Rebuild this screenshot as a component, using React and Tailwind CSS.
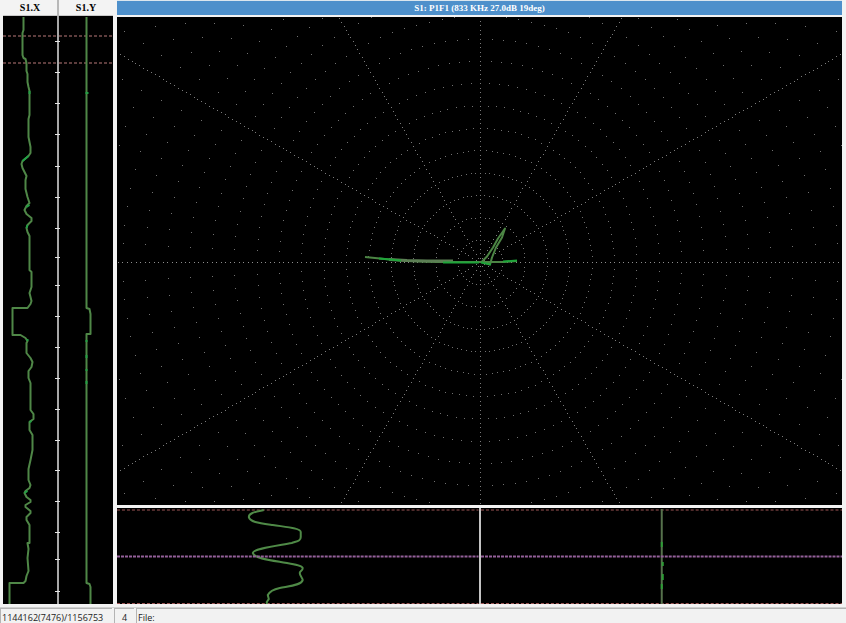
import clsx from "clsx";

const STEP = 22.35;
const CX = 363;
const CY = 245;

// range rings: one dot every 3 degrees, fewer on the small ones
const ringDots = [];
for (let ring = 1; ring <= 19; ring++) {
    const gap = [0, 10, 6, 3.75][ring] || 3;
    for (let deg = 0; deg < 360; deg += gap) {
        if (deg % 30 === 0) continue;
        const a = (deg * Math.PI) / 180;
        ringDots.push([
            Math.round(CX + ring * STEP * Math.cos(a)),
            Math.round(CY + ring * STEP * Math.sin(a)),
        ]);
    }
}

const spokeDots = [];
const axisDots = [];
for (let deg = 0; deg < 360; deg += 30) {
    const a = (deg * Math.PI) / 180;
    const dots = deg % 180 === 0 ? axisDots : spokeDots;
    for (let i = 1; i <= 98; i++) {
        const r = (i * STEP) / 5;
        dots.push([
            Math.round(CX + r * Math.cos(a)),
            Math.round(CY + r * Math.sin(a)),
        ]);
    }
}

const toPath = (dots) => dots.map(([x, y]) => `M${x} ${y}h1v1h-1z`).join("");

const TICKS = [
    25, 56, 87, 118, 150, 181, 212, 241, 269, 300, 331, 362, 393, 424, 454, 485,
    516, 543, 575,
];

const X_TRACE =
    "M20 0V13L19 16V38L20 41L22 42L23 46V54L24 57V65L25 70L26 74V98L25 102V120L27 130V136L25 139L19 144L18 147L19 151L23 159L22 163V172L24 180L26 186L23 189L21 193L23 197L28 201V204L24 208L23 211L24 215L26 219V253L28 255V270L26 276L27 280L28 284L27 287L24 291H9V318H17L22 321L24 324L23 326V336L27 341L29 345L28 350L25 354V361L27 366V393L30 397V402L26 405V413L29 418V433L27 443L25 452V463L27 468L26 471L22 474L21 476L23 480L27 483V485L22 488V490L27 494V496L23 500V503L26 508V526H24L25 532L24 541L25 554L23 559L22 564L20 566H6V588";
const Y_TRACE = "M27 0V291L30 292L31 297V317H27V566L30 567L31 570V588";

function Channel({ label, path, marks, className }) {
    return (
        <section className={clsx("flex min-w-0 flex-1 flex-col", className)}>
            <h2 className="h-4 border-b border-[#c9c9c9] bg-[#f3f3f3] text-center text-[10px] leading-[15px] font-bold text-black">
                {label}
            </h2>
            <svg
                viewBox="0 0 54 588"
                preserveAspectRatio="none"
                className="min-h-0 w-full flex-1 bg-black"
            >
                <path
                    d="M0 20H54M0 47H54"
                    stroke="#7c5252"
                    strokeWidth="1.5"
                    strokeDasharray="3 2"
                />
                <g fill="none" transform="translate(0.5 1)">
                    <path
                        d={path}
                        stroke="#4f8747"
                        strokeWidth="2"
                        strokeLinejoin="round"
                    />
                    <path d={marks} stroke="#22a045" strokeWidth="2" />
                </g>
            </svg>
        </section>
    );
}

function StripChart() {
    return (
        <section className="flex min-w-0">
            <Channel
                label="S1.X"
                path={X_TRACE}
                marks="M26 74v3M25 139L19 144M26 188L23 190M24 208L23 211M24 322v2M26 405l2 -1M21 476l3 -2"
            />
            <div className="z-10 -mx-[2px] flex w-[6px] flex-col">
                <div className="mx-auto h-4 w-[2px] bg-[#b8b8b8]" />
                <svg
                    viewBox="0 0 6 588"
                    preserveAspectRatio="none"
                    shapeRendering="crispEdges"
                    className="min-h-0 w-full flex-1"
                >
                    <path d="M2 0h2v588h-2z" fill="#a8a8a8" />
                    {TICKS.map((y) => (
                        <path key={y} d={`M0 ${y}h5v1h-5z`} fill="#e4e4e4" />
                    ))}
                </svg>
            </div>
            <Channel
                label="S1.Y"
                path={Y_TRACE}
                marks="M26 76h3M27 323v2M27 338v3M27 352v2M27 364v3"
            />
        </section>
    );
}

function ImpedancePlane() {
    return (
        <section className="flex min-h-0 flex-1 flex-col">
            <h1 className="h-[15px] border-t border-[#dbe6ee] bg-[#4e90cb] text-center text-[9px] leading-[14px] font-bold text-white">
                S1: P1F1 (833 KHz 27.0dB 19deg)
            </h1>
            <svg
                viewBox="0 0 725 489"
                preserveAspectRatio="xMidYMid slice"
                className="mt-[2px] min-h-0 w-full flex-1 bg-black"
            >
                <g shapeRendering="crispEdges">
                    <path d={toPath(ringDots)} fill="#707070" />
                    <path d={toPath(spokeDots)} fill="#7a7a7a" />
                    <path d={toPath(axisDots)} fill="#8e8e8e" />
                </g>
                <g fill="none" strokeLinejoin="round">
                    <path
                        d="M248 240.5L268 242.5L290 244.5L320 245.5H363L387 245.5L400 244.5"
                        stroke="#4c8544"
                        strokeWidth="2"
                    />
                    <path
                        d="M272 243L290 244L310 244.5H336"
                        stroke="#5c7f54"
                        strokeWidth="3"
                    />
                    <path
                        d="M365 245L370 240L376 231L381 222L388 212L385 221L379 231L375 241L373 248L367 246"
                        stroke="#4c8544"
                        strokeWidth="2"
                    />
                    <path
                        d="M262 242L284 244M326 246H362M364 246L374 248M386 245L400 244"
                        stroke="#1fa53a"
                        strokeWidth="2"
                    />
                </g>
            </svg>
        </section>
    );
}

function DetailPane({ className, children }) {
    return (
        <svg
            viewBox="0 0 362 96"
            preserveAspectRatio="none"
            className={clsx("h-full w-full border-[#c4c4c4]", className)}
        >
            <path
                d="M0 2H362M0 95.5H362"
                stroke="#a05656"
                strokeDasharray="3 2"
            />
            {children}
            <path
                d="M0 48.5H362"
                stroke="#94609a"
                strokeWidth="2"
                strokeDasharray="3 1"
            />
        </svg>
    );
}

function DetailStrip() {
    return (
        <section className="mt-[3px] grid h-[96px] grid-cols-2 bg-black">
            <DetailPane className="border-r">
                <path
                    d="M147 2C138 4 132 5 132 9C133 14 142 15 156 17C169 19 184 20 184 24V29C184 33 181 33 175 35C159 38 136 41 136 45C137 50 151 52 164 54C175 56 185 57 186 60C186 63 183 63 183 65C183 68 186 70 186 72C185 77 173 78 163 80C154 82 152 85 151 87L152 91L150 94V96"
                    fill="none"
                    stroke="#4f8a47"
                    strokeWidth="2"
                />
            </DetailPane>
            <DetailPane className="border-l">
                <path d="M181 1V96" stroke="#56724c" strokeWidth="2" />
                <path
                    d="M181 34v5M182 54v4M182 66v6M181 76v5"
                    stroke="#2c9c35"
                    strokeWidth="2"
                />
            </DetailPane>
        </section>
    );
}

function StatusBar() {
    return (
        <footer className="flex gap-[2px] bg-[#f2f2f2] font-['Open_Sans','Noto_Sans',sans-serif] text-[9px] leading-[11px] text-[#222]">
            <span className="w-[112px] border-t border-l border-[#b4b4b4] pt-[3px] pl-px whitespace-nowrap">
                1144162(7476)/1156753
            </span>
            <span className="w-[20px] border-t border-l border-[#b4b4b4] pt-[3px] text-center">
                4
            </span>
            <span className="flex-1 border-t border-l border-[#b4b4b4] pt-[3px] pl-px">
                File:
            </span>
        </footer>
    );
}

export default function App() {
    return (
        <div className="flex h-screen flex-col bg-[#f3f3f3] font-['Liberation_Serif',serif]">
            <main className="grid min-h-0 flex-1 grid-cols-[110px_minmax(0,1fr)] gap-x-1 pr-1 pl-[3px]">
                <StripChart />
                <div className="flex min-h-0 min-w-0 flex-col">
                    <ImpedancePlane />
                    <DetailStrip />
                </div>
            </main>
            <div className="h-1 border-b border-[#d0d0d0] bg-[#f3f3f3]" />
            <StatusBar />
        </div>
    );
}
